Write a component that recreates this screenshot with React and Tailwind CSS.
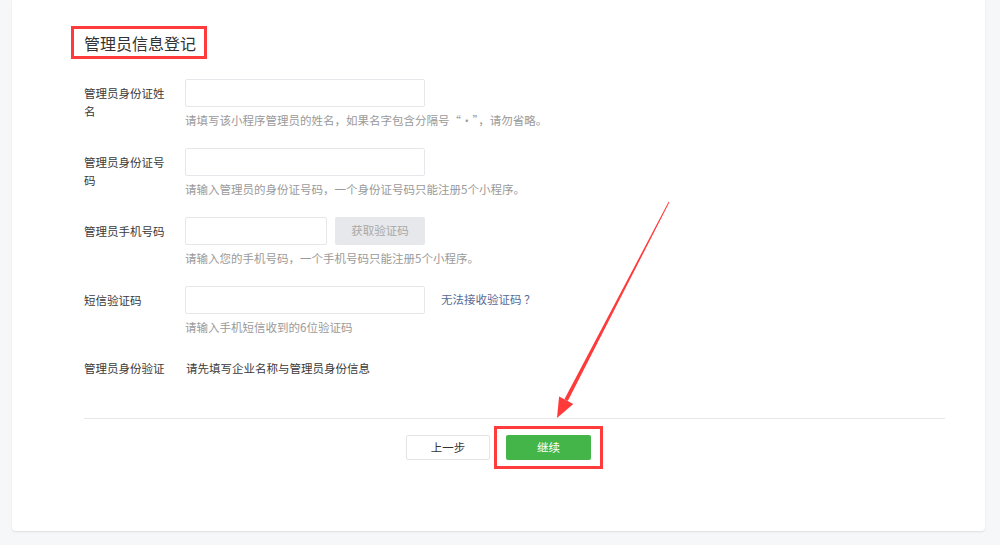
import React from "react";

const font = { fontFamily: '"Noto Sans CJK SC", "Noto Sans", sans-serif' };

function Row({ label, children, hint }) {
  return (
    <div className="flex mb-[20px]">
      <div className="w-[88px] mr-[13px] pt-[5px] leading-[18px] text-[11.5px] text-[#3a3a3a] break-all">
        {label}
      </div>
      <div className="flex flex-col">
        {children}
        {hint && (
          <div className="mt-[5px] leading-[16px] text-[11.5px] text-[#9a9a9a]">{hint}</div>
        )}
      </div>
    </div>
  );
}

function Input({ w = "w-[240px]" }) {
  return <div className={`${w} h-[28px] border border-[#e7e7eb] rounded-[2px] bg-white`} />;
}

export default function App() {
  return (
    <div className="relative w-[1000px] h-[545px] bg-[#f6f7f9] overflow-hidden" style={font}>
      <div className="ml-[12px] w-[973px] h-[531px] bg-white rounded-b-[4px] shadow-[0_1px_2px_rgba(0,0,0,0.1)] pl-[72px] pr-[40px] pt-[31px]">
        <div className="relative inline-block text-[16px] leading-[24px] text-[#333]">
          管理员信息登记
          <span className="absolute -left-[13px] -right-[11px] -top-[5px] -bottom-[4px] border-[3px] border-[#ff3b3b]" />
        </div>

        <div className="mt-[24px]">
          <Row label="管理员身份证姓名" hint="请填写该小程序管理员的姓名，如果名字包含分隔号“·”，请勿省略。">
            <Input />
          </Row>
          <Row label="管理员身份证号码" hint="请输入管理员的身份证号码，一个身份证号码只能注册5个小程序。">
            <Input />
          </Row>
          <Row label="管理员手机号码" hint="请输入您的手机号码，一个手机号码只能注册5个小程序。">
            <div className="flex gap-[8px]">
              <Input w="w-[142px]" />
              <div className="w-[90px] h-[28px] rounded-[2px] bg-[#e7e8eb] text-[#a8a8a8] text-[11.5px] flex items-center justify-center">
                获取验证码
              </div>
            </div>
          </Row>
          <Row label="短信验证码" hint="请输入手机短信收到的6位验证码">
            <div className="flex items-center">
              <Input />
              <span className="ml-[16px] text-[11.5px] text-[#576b95]">无法接收验证码 ？</span>
            </div>
          </Row>
          <div className="flex">
            <div className="w-[88px] mr-[14px] pt-[4px] leading-[18px] text-[11.5px] text-[#3a3a3a]">管理员身份验证</div>
            <div className="pt-[4px] leading-[18px] text-[11.5px] text-[#3a3a3a]">请先填写企业名称与管理员身份信息</div>
          </div>
        </div>

        <div className="mt-[41px] h-px bg-[#e7e7eb]" />

        <div className="mt-[16px] flex justify-center gap-[16px] -ml-[60px] mr-[-28px]">
          <div className="w-[84px] h-[25px] border border-[#e4e4e4] rounded-[2px] bg-white text-[11.5px] text-[#333] flex items-center justify-center">
            上一步
          </div>
          <div className="relative w-[85px] h-[25px] rounded-[2px] bg-[#44b549] text-[11.5px] text-white flex items-center justify-center">
            继续
            <span className="absolute -left-[12px] -right-[12px] -top-[9px] -bottom-[9px] border-[3px] border-[#ff3b3b]" />
          </div>
        </div>
      </div>

      <svg className="absolute left-0 top-0 pointer-events-none" width="1000" height="545" viewBox="0 0 1000 545">
        <polygon points="669.4,202.2 668.6,201.8 564.4,399.3 567.8,401.1" fill="#ff3a3a" />
        <polygon points="557,418 559.1,396.5 573.3,403.9" fill="#ff3a3a" />
      </svg>
    </div>
  );
}
